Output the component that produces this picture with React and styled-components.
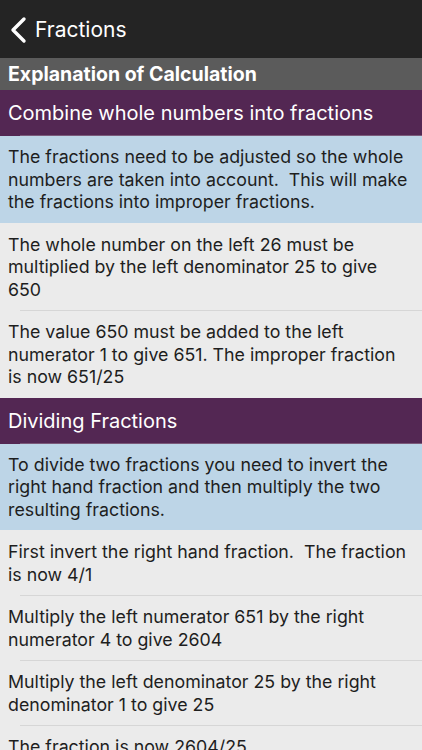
import { createGlobalStyle, styled } from "styled-components"

const GlobalStyle = createGlobalStyle`
    html, body {
        margin: 0;
        padding: 0;
        background: #ebebeb;
    }
    * {
        box-sizing: border-box;
    }
`

const sections = [
    {
        title: "Combine whole numbers into fractions",
        intro: "The fractions need to be adjusted so the whole numbers are taken into account.\u00a0 This will make the fractions into improper fractions.",
        steps: [
            "The whole number on the left 26 must be multiplied by the left denominator 25 to give 650",
            "The value 650 must be added to the left numerator 1 to give 651. The improper fraction is now 651/25",
        ],
    },
    {
        title: "Dividing Fractions",
        intro: "To divide two fractions you need to invert the right hand fraction and then multiply the two resulting fractions.",
        steps: [
            "First invert the right hand fraction.\u00a0 The fraction is now 4/1",
            "Multiply the left numerator 651 by the right numerator 4 to give 2604",
            "Multiply the left denominator 25 by the right denominator 1 to give 25",
            "The fraction is now 2604/25",
        ],
    },
]

const App = () => {
    return (
        <>
            <GlobalStyle />
            <Page>
                <NavBar>
                    <Back>
                        <svg width="20" height="28" viewBox="0 0 20 28">
                            <path d="M15 3 L4 14 L15 25" fill="none" stroke="#fff" strokeWidth="3.4" strokeLinecap="round" strokeLinejoin="round" />
                        </svg>
                        <NavTitle>Fractions</NavTitle>
                    </Back>
                </NavBar>
                <SubHeader>Explanation of Calculation</SubHeader>
                {sections.map((s) => (
                    <section key={s.title}>
                        <SectionTitle>{s.title}</SectionTitle>
                        <Row $intro>{s.intro}</Row>
                        {s.steps.map((step) => (
                            <Row key={step}>{step}</Row>
                        ))}
                    </section>
                ))}
            </Page>
        </>
    )
}

const Page = styled.div`
    width: 422px;
    height: 750px;
    overflow: hidden;
    background: #ebebeb;
    font-family: Inter, "Liberation Sans", Arial, sans-serif;
`

const NavBar = styled.header`
    display: flex;
    align-items: center;
    height: 58px;
    padding: 0 10px 0 9px;
    background: #242424;
`

const Back = styled.div`
    display: flex;
    align-items: center;
    gap: 6px;
    margin-top: 1px;
`

const NavTitle = styled.span`
    color: #fff;
    font-size: 21px;
`

const SubHeader = styled.h2`
    margin: 0;
    height: 32px;
    padding: 0 8px;
    display: flex;
    align-items: center;
    background: #5b5b5b;
    color: #fff;
    font-size: 19.5px;
    font-weight: 700;
`

const SectionTitle = styled.h3`
    position: relative;
    margin: 0;
    height: 46px;
    padding: 0 8px;
    display: flex;
    align-items: center;
    background: #532753;
    color: #fff;
    font-size: 20px;
    font-weight: 400;

    &::after {
        content: "";
        position: absolute;
        bottom: 0;
        left: 20px;
        right: 0;
        height: 1px;
        background: #7a5a7a;
    }
`

const Row = styled.p`
    position: relative;
    margin: 0;
    padding: 10px 8px 9px 8px;
    background: ${(p) => (p.$intro ? "#bdd5e7" : "#ebebeb")};
    color: #1e1e1e;
    font-size: 17.8px;
    line-height: 22.5px;

    & + & {
        border-top: 1px solid transparent;
    }

    & + &::before {
        content: "";
        position: absolute;
        top: -1px;
        left: 20px;
        right: 0;
        height: 1px;
        background: #d6d6d6;
    }
`

export default App
